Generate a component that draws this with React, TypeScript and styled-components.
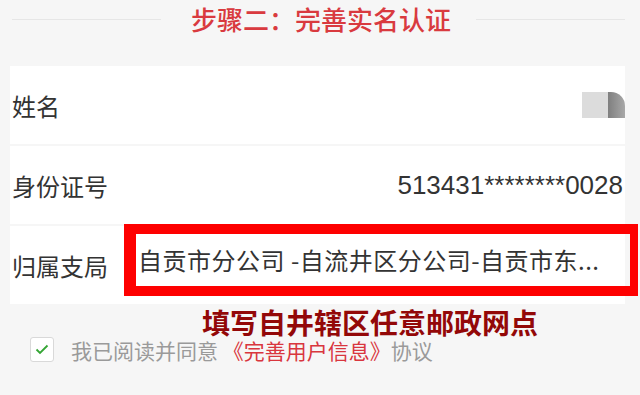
import * as React from 'react';
import styled, { createGlobalStyle } from 'styled-components';

const GlobalStyle = createGlobalStyle`
	html, body {
		margin: 0;
		padding: 0;
		background: #f6f6f6;
		font-family: "Noto Sans CJK SC", "Noto Sans", sans-serif;
	}
`;

const Page = styled.div`
	height: 395px;
	overflow: hidden;
	padding: 0 15px 0 10px;
`;

const StepHeader = styled.div`
	display: flex;
	align-items: center;
	height: 38px;
	margin-bottom: 28px;
	padding-left: 2px;
`;

const HeaderLine = styled.div`
	flex: 1;
	height: 1px;
	background: #e6e6e6;
`;

const StepTitle = styled.h2`
	margin: 0 25px 0 30px;
	font-size: 26px;
	line-height: 38px;
	font-weight: 500;
	color: #d93a3f;
	white-space: nowrap;
`;

const Form = styled.div`
	display: flex;
	flex-direction: column;
	gap: 2px;
`;

const Row = styled.div<{ $top?: boolean }>`
	display: flex;
	align-items: ${(p) => (p.$top ? 'flex-start' : 'center')};
	justify-content: space-between;
	height: 78px;
	padding-left: 2px;
	background: #fff;
`;

const Label = styled.span`
	align-self: center;
	font-size: 24px;
	color: #333;
	white-space: nowrap;
`;

const Value = styled.span`
	font-family: "Liberation Sans", "Noto Sans CJK SC", sans-serif;
	font-size: 26px;
	color: #333;
	padding-right: 2px;
`;

const Masked = styled.div`
	display: flex;
	height: 26px;
	filter: blur(0.6px);
	> .light {
		width: 26px;
		background: #dcdcdc;
	}
	> .dark {
		width: 17px;
		background: linear-gradient(90deg, #7f7f7f, #a8a8a8);
		border-radius: 0 14px 0 0;
	}
`;

const MarkedBox = styled.div`
	flex: 1;
	box-sizing: border-box;
	height: 72px;
	margin: -2px -13px 0 16px;
	border: 10px solid #fe0000;
	border-left-width: 12px;
	border-right-width: 8px;
	padding-left: 2px;
	font-size: 24px;
	letter-spacing: 0.5px;
	line-height: 52px;
	color: #333;
	white-space: nowrap;
	overflow: hidden;
`;

const Note = styled.div`
	margin-top: 3px;
	padding-left: 192px;
	font-size: 28px;
	line-height: 30px;
	font-weight: 700;
	color: #930808;
	white-space: nowrap;
`;

const Agree = styled.div`
	display: flex;
	align-items: center;
	gap: 17px;
	padding-left: 20px;
	font-size: 21px;
	line-height: 24px;
	color: #9a9a9a;
	white-space: nowrap;
`;

const AgreeLink = styled.a`
	color: #d9363e;
	text-decoration: none;
`;

const CheckBox = styled.span`
	display: flex;
	align-items: center;
	justify-content: center;
	width: 24px;
	height: 25px;
	box-sizing: border-box;
	border: 1px solid #d9d9d9;
	border-radius: 3px;
	background: #fff;
`;

export default function App() {
	return (
		<>
			<GlobalStyle />
			<Page>
				<StepHeader>
					<HeaderLine />
					<StepTitle>步骤二：完善实名认证</StepTitle>
					<HeaderLine />
				</StepHeader>

				<Form>
					<Row>
						<Label>姓名</Label>
						<Masked>
							<div className="light" />
							<div className="dark" />
						</Masked>
					</Row>
					<Row>
						<Label>身份证号</Label>
						<Value>513431********0028</Value>
					</Row>
					<Row $top>
						<Label>归属支局</Label>
						<MarkedBox>自贡市分公司 -自流井区分公司-自贡市东...</MarkedBox>
					</Row>
				</Form>

				<Note>填写自井辖区任意邮政网点</Note>

				<Agree>
					<CheckBox>
						<svg width="14" height="11" viewBox="0 0 14 11">
							<polyline points="1.5,5.5 5,9 12.5,1.5" fill="none" stroke="#34a534" strokeWidth="1.8" />
						</svg>
					</CheckBox>
					<span>
						我已阅读并同意 <AgreeLink href="#">《完善用户信息》</AgreeLink>协议
					</span>
				</Agree>
			</Page>
		</>
	);
}
